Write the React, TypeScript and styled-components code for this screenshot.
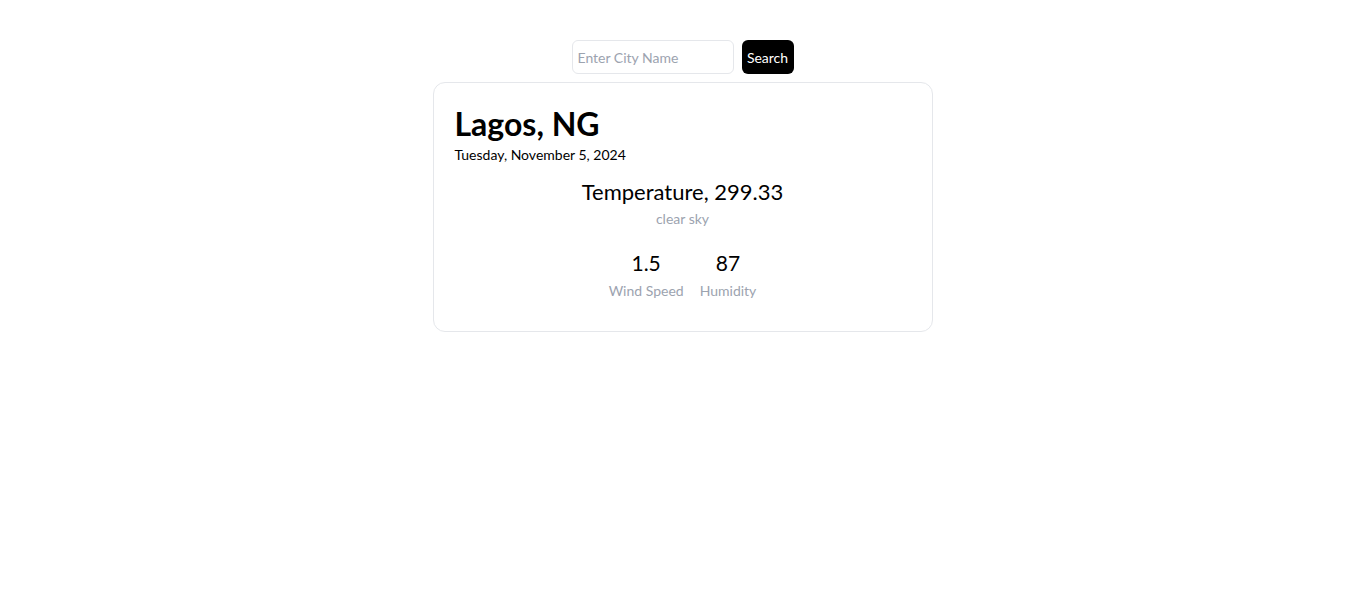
import React from "react";
import styled, { createGlobalStyle } from "styled-components";

const Global = createGlobalStyle`
  * { box-sizing: border-box; }
  body { margin: 0; background: #fff; font-family: "Lato", "Noto Sans", sans-serif; color: #000; }
`;

const Page = styled.main`
  display: flex;
  flex-direction: column;
  align-items: center;
  padding-top: 40px;
  padding-left: 3px;
  gap: 8px;
`;

const SearchRow = styled.form`
  display: flex;
  gap: 8px;
`;

const Input = styled.input`
  width: 162px;
  height: 34px;
  border: 1px solid #e5e7eb;
  border-radius: 6px;
  padding: 0 5px;
  font-family: inherit;
  font-size: 14px;
  outline: none;
  &::placeholder { color: #9ca3af; }
`;

const Button = styled.button`
  height: 34px;
  width: 52px;
  border: none;
  border-radius: 6px;
  background: #000;
  color: #fff;
  font-family: inherit;
  font-size: 14px;
  padding: 0;
`;

const Card = styled.section`
  width: 500px;
  height: 250px;
  border: 1px solid #e5e7eb;
  border-radius: 12px;
  padding: 20px 21px;
  display: flex;
  flex-direction: column;
`;

const City = styled.h1`
  margin: 0;
  font-size: 32px;
  font-weight: 700;
  line-height: 42px;
`;

const DateText = styled.p`
  margin: 0;
  font-size: 14px;
  line-height: 20px;
`;

const Center = styled.div`
  display: flex;
  flex-direction: column;
  align-items: center;
  margin-top: 12px;
`;

const Temp = styled.p`
  margin: 0;
  font-size: 22px;
  line-height: 30px;
`;

const Muted = styled.p<{ $offset?: number }>`
  margin: ${(p) => p.$offset ?? 0}px 0 0;
  font-size: 14px;
  line-height: 20px;
  color: #9ca3af;
`;

const Stats = styled.div`
  display: flex;
  gap: 16px;
  margin-top: 20px;
`;

const Stat = styled.div`
  display: flex;
  flex-direction: column;
  align-items: center;
  gap: 4px;
`;

const StatValue = styled.p`
  margin: 0;
  font-size: 21px;
  line-height: 28px;
`;

export default function App() {
  return (
    <>
      <Global />
      <Page>
        <SearchRow onSubmit={(e) => e.preventDefault()}>
          <Input placeholder="Enter City Name" />
          <Button type="submit">Search</Button>
        </SearchRow>
        <Card>
          <City>Lagos, NG</City>
          <DateText>Tuesday, November 5, 2024</DateText>
          <Center>
            <Temp>Temperature, 299.33</Temp>
            <Muted $offset={2}>clear sky</Muted>
            <Stats>
              <Stat>
                <StatValue>1.5</StatValue>
                <Muted>Wind Speed</Muted>
              </Stat>
              <Stat>
                <StatValue>87</StatValue>
                <Muted>Humidity</Muted>
              </Stat>
            </Stats>
          </Center>
        </Card>
      </Page>
    </>
  );
}
